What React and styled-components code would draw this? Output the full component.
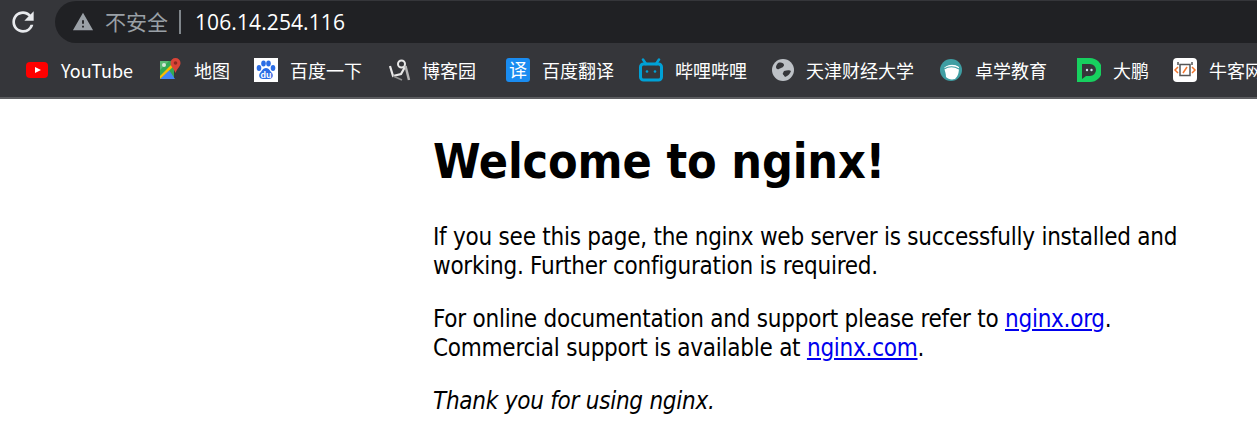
import React from 'react';
import styled, { createGlobalStyle } from 'styled-components';

const GlobalStyle = createGlobalStyle`
  html, body {
    margin: 0;
    padding: 0;
    background: #fff;
    overflow: hidden;
  }
`;

const Page = styled.div`
  width: 1257px;
  height: 443px;
  overflow: hidden;
  display: flex;
  flex-direction: column;
`;

const Chrome = styled.header`
  flex: none;
  background: #35363a;
  border-bottom: 2px solid #5c5d60;
  font-family: "Noto Sans CJK SC", "Liberation Sans", sans-serif;
  color: #fff;
`;

const TopRow = styled.div`
  height: 44px;
  display: flex;
  align-items: center;
  padding-left: 7px;
`;

const Reload = styled.svg`
  width: 32px;
  height: 32px;
  fill: #e8eaed;
  margin-right: 16px;
`;

const AddressBar = styled.div`
  flex: 1;
  height: 42px;
  margin-top: -1px;
  background: #202124;
  border-radius: 21px 0 0 21px;
  display: flex;
  align-items: center;
  padding-left: 17px;
`;

const Warning = styled.svg`
  width: 22px;
  height: 22px;
  fill: #9aa0a6;
`;

const Insecure = styled.span`
  margin-left: 11px;
  padding-bottom: 2px;
  font-size: 21px;
  color: #9aa0a6;
`;

const Divider = styled.i`
  width: 2px;
  height: 24px;
  margin: 0 14px 0 11px;
  background: #80868b;
`;

const Url = styled.span`
  font-family: "Open Sans", "Liberation Sans", sans-serif;
  font-size: 21px;
  letter-spacing: 0.1px;
  color: #fff;
`;

const BookmarkRow = styled.nav`
  height: 53px;
  box-sizing: border-box;
  display: flex;
  align-items: center;
  padding: 0 0 2px 25px;
  white-space: nowrap;
  overflow: hidden;
`;

const Bookmark = styled.a`
  flex: none;
  display: flex;
  align-items: center;
  margin-right: ${(p) => p.$after}px;
`;

const IconSlot = styled.span`
  flex: none;
  width: 24px;
  height: 24px;
  display: flex;
  align-items: center;
  justify-content: center;
  margin-right: ${(p) => p.$gap}px;

  svg {
    display: block;
  }
`;

const BookmarkLabel = styled.span`
  font-size: 18px;
  line-height: 24px;
`;

const Content = styled.main`
  padding: 33px 0 0 433px;
  font-family: "DejaVu Sans", sans-serif;
  font-stretch: condensed;
  color: #000;
`;

const Title = styled.h1`
  margin: 0 0 33px;
  font-size: 48px;
  line-height: 58px;
  font-weight: 700;
  letter-spacing: -0.15px;
`;

const Para = styled.p`
  margin: 0 0 24px;
  width: 790px;
  font-size: 24px;
  line-height: 29px;
  letter-spacing: -0.25px;
  font-style: ${(p) => (p.$italic ? 'italic' : 'normal')};
`;

const Link = styled.a`
  color: #0000ee;
  text-decoration: underline;
`;

const YouTubeIcon = () => (
  <svg width="22" height="16" viewBox="0 0 22 16">
    <rect width="22" height="16" rx="4" fill="#f00" />
    <path d="M9 5l6 3-6 3z" fill="#fff" />
  </svg>
);

const MapsIcon = () => (
  <svg width="24" height="24" viewBox="-2 0 24 24">
    <path d="M0 3h14v18H0z" fill="#34a853" />
    <path d="M0 21l9-9 6 9z" fill="#4285f4" />
    <path d="M0 18L13 5l2 2L0 21z" fill="#fbbc04" />
    <path d="M0 3h9L0 12z" fill="#5bb974" />
    <circle cx="4" cy="7" r="2" fill="#d5e8d8" />
    <path d="M15.500 0a5 5 0 0 1 5 5c0 3.500-3.500 5.500-5 10-1.500-4.500-5-6.500-5-10a5 5 0 0 1 5-5z" fill="#db4437" />
    <circle cx="15.500" cy="5" r="1.800" fill="#8e2a20" />
  </svg>
);

const BaiduIcon = () => (
  <svg width="24" height="24" viewBox="0 0 24 24">
    <rect width="24" height="24" fill="#fff" />
    <g fill="#2b6de5">
      <ellipse cx="5" cy="10" rx="2.300" ry="3" />
      <ellipse cx="9.500" cy="5.500" rx="2.300" ry="3" />
      <ellipse cx="14.500" cy="5.500" rx="2.300" ry="3" />
      <ellipse cx="19" cy="10" rx="2.300" ry="3" />
      <path d="M12 10c3 0 4 3 6 5 2 3 0 6-3 6H9c-3 0-5-3-3-6 2-2 3-5 6-5z" />
    </g>
    <text x="12" y="20" textAnchor="middle" fontSize="9" fontWeight="700" fontFamily="Liberation Sans, sans-serif" fill="#fff">du</text>
  </svg>
);

const CnblogsIcon = () => (
  <svg width="22" height="24" viewBox="0 0 22 24" fill="none" stroke="#e8e8e8">
    <circle cx="12.500" cy="6" r="3.500" strokeWidth="2" />
    <path d="M1 8l3 10 8-2 4.500-8" strokeWidth="2.200" />
    <path d="M16.500 8l3.500 14" strokeWidth="2.500" stroke="#b5b5b5" />
    <path d="M4 18l9 4" strokeWidth="1.500" stroke="#8f8f8f" />
  </svg>
);

const TranslateIcon = () => (
  <svg width="24" height="24" viewBox="0 0 24 24">
    <rect width="24" height="24" rx="3" fill="#1a8cf0" />
    <text x="12" y="19" textAnchor="middle" fontSize="18" fontFamily="Noto Sans CJK SC, sans-serif" fill="#fff">译</text>
  </svg>
);

const BilibiliIcon = () => (
  <svg width="24" height="24" viewBox="0 0 24 24" fill="none" stroke="#00a1d6">
    <rect x="1.500" y="6" width="21" height="16" rx="3" strokeWidth="3" />
    <path d="M7 6L4 1.500M17 6l3-4.500" strokeWidth="2.500" strokeLinecap="round" />
    <circle cx="8" cy="13.500" r="1.300" fill="#00a1d6" strokeWidth="0" />
    <circle cx="16" cy="13.500" r="1.300" fill="#00a1d6" strokeWidth="0" />
  </svg>
);

const GlobeIcon = () => (
  <svg width="22" height="22" viewBox="0 0 22 22">
    <circle cx="11" cy="11" r="11" fill="#bdc1c6" />
    <path d="M6 4c3-1 6 0 6 2s-3 3-5 4-3-1-3-2 1-3 2-4z" fill="#35363a" />
    <path d="M12 12c3-1 6-1 7 0-1 3-3 5-6 6-1-2-3-3-2-4z" fill="#35363a" />
  </svg>
);

const ZhuoxueIcon = () => (
  <svg width="22" height="22" viewBox="0 0 22 22">
    <circle cx="11" cy="11" r="11" fill="#3f9ea3" />
    <path d="M4 9c4-4 11-4 15-1 0 6-1 9-4 12-4 1-7 0-9-2 0-3-1-6-2-9z" fill="#fff" />
    <path d="M5 7c4-3 10-3 14 0M4 10c5-3 10-3 15 0" stroke="#3f9ea3" strokeWidth="1.200" fill="none" />
  </svg>
);

const DapengIcon = () => (
  <svg width="24" height="24" viewBox="0 0 24 24">
    <path d="M0 0h13a11.500 11.500 0 0 1 0 24H0z" fill="#17d05f" />
    <path d="M5 6h8a6 6 0 0 1 0 12H9l-4 3z" fill="#35363a" />
    <circle cx="10" cy="12" r="1.200" fill="#cde" />
    <circle cx="14.500" cy="12" r="1.200" fill="#cde" />
  </svg>
);

const NowcoderIcon = () => (
  <svg width="24" height="24" viewBox="0 0 24 24">
    <rect width="24" height="24" rx="4" fill="#fff" />
    <rect x="7" y="6.500" width="10" height="11" fill="none" stroke="#555" strokeWidth="1.500" />
    <path d="M5 9l-3 3 3 3M19 9l3 3-3 3M10 15l4-6" fill="none" stroke="#f2762e" strokeWidth="1.500" />
    <path d="M5 4v3M19 4v3" stroke="#555" strokeWidth="1.500" />
  </svg>
);

const bookmarks = [
  { label: 'YouTube', Icon: YouTubeIcon, gap: 12, after: 25 },
  { label: '地图', Icon: MapsIcon, gap: 12, after: 24 },
  { label: '百度一下', Icon: BaiduIcon, gap: 12, after: 26 },
  { label: '博客园', Icon: CnblogsIcon, gap: 10, after: 30 },
  { label: '百度翻译', Icon: TranslateIcon, gap: 12, after: 25 },
  { label: '哔哩哔哩', Icon: BilibiliIcon, gap: 12, after: 24 },
  { label: '天津财经大学', Icon: GlobeIcon, gap: 11, after: 25 },
  { label: '卓学教育', Icon: ZhuoxueIcon, gap: 12, after: 30 },
  { label: '大鹏', Icon: DapengIcon, gap: 12, after: 24 },
  { label: '牛客网', Icon: NowcoderIcon, gap: 12, after: 0 },
];

const App = () => (
  <Page>
    <GlobalStyle />
    <Chrome>
      <TopRow>
        <Reload viewBox="0 0 24 24">
          <path d="M17.65 6.35A7.958 7.958 0 0 0 12 4c-4.420 0-7.990 3.580-7.990 8s3.570 8 7.990 8c3.730 0 6.840-2.550 7.730-6h-2.080A5.990 5.990 0 0 1 12 18c-3.310 0-6-2.690-6-6s2.690-6 6-6c1.660 0 3.140.690 4.220 1.780L13 11h7V4l-2.350 2.350z" />
        </Reload>
        <AddressBar>
          <Warning viewBox="0 0 24 24">
            <path d="M1 21h22L12 2 1 21zm12-3h-2v-2h2v2zm0-4h-2v-4h2v4z" />
          </Warning>
          <Insecure>不安全</Insecure>
          <Divider />
          <Url>106.14.254.116</Url>
        </AddressBar>
      </TopRow>
      <BookmarkRow>
        {bookmarks.map(({ label, Icon, gap, after }) => (
          <Bookmark key={label} $after={after}>
            <IconSlot $gap={gap}>
              <Icon />
            </IconSlot>
            <BookmarkLabel>{label}</BookmarkLabel>
          </Bookmark>
        ))}
      </BookmarkRow>
    </Chrome>
    <Content>
      <Title>Welcome to nginx!</Title>
      <Para>
        If you see this page, the nginx web server is successfully installed and
        <br />
        working. Further configuration is required.
      </Para>
      <Para>
        For online documentation and support please refer to <Link href="#">nginx.org</Link>.
        <br />
        Commercial support is available at <Link href="#">nginx.com</Link>.
      </Para>
      <Para $italic>Thank you for using nginx.</Para>
    </Content>
  </Page>
);

export default App;
